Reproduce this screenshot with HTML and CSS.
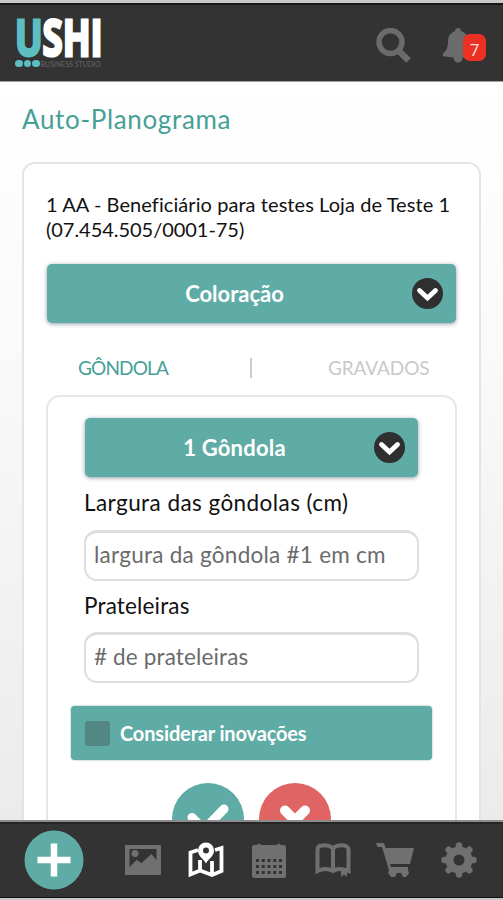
FILE: index.html
```html
<!DOCTYPE html>
<html lang="pt-BR">
<head>
<meta charset="utf-8">
<title>Auto-Planograma</title>
<link rel="stylesheet" href="styles.css">
</head>
<body>
<header class="topbar">
  <div class="logo">
    <div class="logo-name"><span class="logo-u">U</span><span>SHI</span></div>
    <div class="logo-sub"><i></i><i></i><i></i><span>BUSINESS STUDIO</span></div>
  </div>
  <div class="top-actions">
    <svg class="search" viewBox="0 0 36 36"><circle cx="14.500" cy="14" r="11.500" fill="none" stroke="currentColor" stroke-width="5.500"/><path d="M22.500 22.500 32.500 32.500" stroke="currentColor" stroke-width="6.500"/></svg>
    <div class="notify">
      <svg class="bell" viewBox="0 0 32 36"><path d="M16 0c2 0 3 1.300 3 3.200 5 1.300 7 5 7 10.300 0 7 2 9.500 5 12.500v3.500H20.500c0 3-2 5-4.500 5s-4.500-2-4.500-5L2.500 28.500C.5 28 0 26.300 1.500 25 4.500 22 6 19.500 6 13.500 6 8 8.500 4.500 13 3.200 13 1.300 14 0 16 0Z" fill="currentColor"/></svg>
      <span class="badge">7</span>
    </div>
  </div>
</header>
<main class="content">
  <h1 class="title">Auto-Planograma</h1>
  <section class="card">
    <p class="store"><span class="store-name">1 AA - Beneficiário para testes Loja de Teste 1</span><br><span class="store-id">(07.454.505/0001-75)</span></p>
    <button class="select"><span class="select-text coloring">Coloração</span><svg class="chevron" viewBox="0 0 31 31"><circle cx="15.500" cy="15.500" r="15.500" fill="#2f2f30"/><path d="m7.500 12.500 8 7.500 8-7.500" fill="none" stroke="#fff" stroke-width="4.800" stroke-linecap="round"/></svg></button>
    <nav class="tabs"><span class="tab active">GÔNDOLA</span><i class="divider"></i><span class="tab saved">GRAVADOS</span></nav>
    <div class="panel">
      <button class="select"><span class="select-text gondola">1 Gôndola</span><svg class="chevron" viewBox="0 0 31 31"><circle cx="15.500" cy="15.500" r="15.500" fill="#2f2f30"/><path d="m7.500 12.500 8 7.500 8-7.500" fill="none" stroke="#fff" stroke-width="4.800" stroke-linecap="round"/></svg></button>
      <label class="label label-width">Largura das gôndolas (cm)</label>
      <div class="field hint-width">largura da gôndola #1 em cm</div>
      <label class="label label-shelves">Prateleiras</label>
      <div class="field hint-shelves"># de prateleiras</div>
      <div class="check"><i class="box"></i><span class="check-text">Considerar inovações</span></div>
      <div class="actions">
        <svg class="round" viewBox="0 0 72 72"><circle cx="36" cy="36" r="36" fill="#5faca6"/><path d="m20 34.500 12 12 20-20.500" fill="none" stroke="#fff" stroke-width="9" stroke-linecap="round"/></svg>
        <svg class="round" viewBox="0 0 72 72"><circle cx="36" cy="36" r="36" fill="#df6463"/><path d="m26 27.500 20 20M46 27.500 26 47.500" stroke="#fff" stroke-width="10" stroke-linecap="round"/></svg>
      </div>
    </div>
  </section>
</main>
<footer class="bottombar">
  <svg class="plus" viewBox="0 0 60 60"><circle cx="30" cy="30" r="29.500" fill="#5faca6"/><path d="M30 13.500v33M13.500 30h33" stroke="#fff" stroke-width="6.500"/></svg>
  <svg class="icon photo" viewBox="0 0 36 36"><path fill="currentColor" fill-rule="evenodd" d="M1 3h34q1 0 1 1v28q0 1-1 1H1q-1 0-1-1V4q0-1 1-1Zm3.500 4v18l7-7 5 3 10-9 5 6V7Z"/><circle cx="10" cy="11.500" r="3.500" fill="currentColor"/></svg>
  <svg class="icon map" viewBox="0 0 36 36"><path d="M10 8 2.500 10.500v22L12 28.500l12 4.500 9.500-4V6L27 8M12 18v10M24 19v13" fill="none" stroke="currentColor" stroke-width="3.800"/><path fill="currentColor" fill-rule="evenodd" d="M18 .5a8 8 0 0 0-8 8c0 6 5 7.500 8 13 3-5.500 8-7 8-13a8 8 0 0 0-8-8Zm0 5a3 3 0 1 1 0 6 3 3 0 0 1 0-6Z"/></svg>
  <svg class="icon calendar" viewBox="0 0 36 36"><path d="M3 3h3q2-3 4 0h16q2-3 4 0h3q2 0 2 2v29q0 2-2 2H3q-2 0-2-2V5q0-2 2-2Z" fill="currentColor"/><path d="M5 18.500h26M5 24.500h26M5 30.500h26" stroke="#333" stroke-width="3" stroke-dasharray="3 2.750"/></svg>
  <svg class="icon book" viewBox="0 0 36 36"><path d="M18 6Q12 2 4.500 4 3 5 2.500 7v22Q11 25 18 29q6-4 15.500 0V7Q33 5 31 4 24 2 18 6v22" fill="none" stroke="currentColor" stroke-width="4"/><path d="M26 27h6v8l-3-2.500-3 2.500Z" fill="currentColor"/></svg>
  <svg class="icon cart" viewBox="0 0 38 36"><path d="M0 1h7q1 0 1.500 1.500L9.500 6H38l-4 16H14l1 3h17v3l1 3-3 4h-3l-2-4h-4l-2 4h-4l-3-4 1-3L6 5H1.500Z" fill="currentColor"/></svg>
  <svg class="icon gear" viewBox="0 0 36 36"><circle cx="18" cy="18" r="9.500" fill="none" stroke="currentColor" stroke-width="8"/><path d="M18 3.500v4M18 28.500v4M3.500 18h4M28.500 18h4M7.700 7.700l3 3M25.300 25.300l3 3M7.700 28.300l3-3M25.300 10.700l3-3" stroke="currentColor" stroke-width="6.500" stroke-linecap="round"/></svg>
</footer>
</body>
</html>
```
FILE: styles.css
```css
* { box-sizing: border-box; }
body {
  margin: 0;
  width: 503px;
  height: 900px;
  overflow: hidden;
  display: flex;
  flex-direction: column;
  font-family: Lato, "Open Sans", sans-serif;
  color: #111;
}
.topbar {
  flex: 0 0 82px;
  display: flex;
  justify-content: space-between;
  padding: 14px 17px 0 15px;
  background: #333;
  border-top: 3px solid #c9c9c9;
  border-bottom: 1px solid #a0a0a0;
  box-shadow: inset 0 2px #171717;
}
.logo { width: 88px; }
.logo-name {
  display: flex;
  height: 42px;
  color: #fff;
  font: bold 50px/40px "Open Sans", sans-serif;
  transform: scaleX(.73);
  transform-origin: left;
  -webkit-text-stroke: 3px currentColor;
}
.logo-u { color: #5bbfc2; }
.logo-sub { display: flex; align-items: center; height: 9px; }
.logo-sub i { width: 7.500px; height: 7.500px; margin-right: 1px; border-radius: 50%; background: #5bbfc2; }
.logo-sub span { color: #666; font-size: 7px; line-height: 8px; white-space: nowrap; }
.top-actions { display: flex; gap: 30px; padding-top: 11px; color: #6b6b6b; }
.search { width: 36px; height: 36px; }
.notify { position: relative; width: 44px; height: 36px; }
.bell { display: block; width: 32px; height: 36px; }
.badge {
  position: absolute;
  left: 21px;
  top: 6px;
  width: 23px;
  height: 27px;
  border-radius: 7px;
  background: #ea3124;
  color: #ffd9d2;
  font: 17px/31px "Noto Sans", sans-serif;
  text-align: center;
}
.content {
  flex: 1;
  min-height: 0;
  overflow: hidden;
  padding: 20px 22px 0;
  background: linear-gradient(#fff 0%, #fafafa 35%, #ebebeb 100%);
}
.title { margin: 0; height: 34px; font-size: 26px; line-height: 34px; font-weight: 400; letter-spacing: .660px; color: #46a096; }
.card {
  height: 800px;
  margin-top: 26px;
  padding: 28px 23px 0;
  background: #fff;
  border: 2px solid #e4e4e4;
  border-radius: 13px;
}
.store { margin: 0 0 22px -1px; font-size: 20px; line-height: 25px; white-space: nowrap; }
.store-name { letter-spacing: .07px; }
.store-id { letter-spacing: -.04px; }
.select {
  position: relative;
  display: flex;
  align-items: center;
  width: 100%;
  height: 59px;
  padding: 0 13px 0 0;
  border: 0;
  border-radius: 5px;
  background: #5faca6;
  box-shadow: 0 1px 4px rgba(40, 60, 80, .5);
  color: #fff;
  font: bold 22px Lato, sans-serif;
}
.select-text { flex: 1; text-align: center; padding-left: 10px; white-space: nowrap; }
.gondola { letter-spacing: .2px; }
.chevron { width: 31px; height: 31px; }
.tabs { display: flex; align-items: center; height: 72px; padding: 17px 27px 0 31px; justify-content: space-between; font-size: 19px; color: #c9c9c9; }
.tab { width: 101px; white-space: nowrap; }
.active { color: #46a096; letter-spacing: -.85px; }
.saved { letter-spacing: -.1px; }
.divider { width: 2px; height: 20px; margin-right: 56px; margin-left: 50px; background: #ccc; }
.panel {
  height: 500px;
  margin: 0 -1px;
  padding: 21px 37px 0;
  border: 2px solid #e7e7e7;
  border-radius: 14px;
}
.label { display: block; height: 52.500px; margin-left: -1px; font-size: 22.500px; line-height: 52px; white-space: nowrap; }
.label-width { letter-spacing: .44px; }
.label-shelves { height: 51.500px; line-height: 49px; letter-spacing: .17px; }
.field {
  height: 51px;
  margin: 0 -1px;
  padding-left: 8px;
  border: 2px solid #dedede;
  border-top-width: 3px;
  border-radius: 13px;
  font-size: 22.500px;
  line-height: 44px;
  color: #6b6b6b;
  white-space: nowrap;
}
.hint-width { letter-spacing: .26px; }
.hint-shelves { letter-spacing: .14px; }
.check {
  display: flex;
  align-items: center;
  height: 54px;
  margin: 23px -14px 0;
  padding-left: 14px;
  border-radius: 4px;
  background: #5faca6;
  box-shadow: 0 0 2px #79a6a4;
  color: #fff;
  font-size: 20px;
  font-weight: bold;
  white-space: nowrap;
}
.check-text { letter-spacing: -.15px; }
.box { width: 25px; height: 25px; margin-right: 10px; border-radius: 3px; background: #528783; }
.actions { display: flex; justify-content: center; gap: 15px; margin-top: 23px; }
.round { width: 72px; height: 72px; }
.bottombar {
  flex: 0 0 80px;
  display: flex;
  align-items: center;
  padding: 0 0 1px 24px;
  background: #333;
  border-top: 2px solid #8c8c8c;
  border-bottom: 2px solid #c9c9c9;
  box-shadow: inset 0 2px #262626, inset 0 -1px #111;
  color: #707070;
}
.plus { width: 60px; height: 60px; margin-right: 41px; }
.icon { width: 36px; height: 36px; margin: 1px 27px 0 0; flex: none; }
.map { color: #fff; margin-right: 27px; }
.calendar { margin-right: 28px; }
.book { margin-right: 25px; }
.cart { width: 38px; }
.gear { margin-right: 0; }
```
